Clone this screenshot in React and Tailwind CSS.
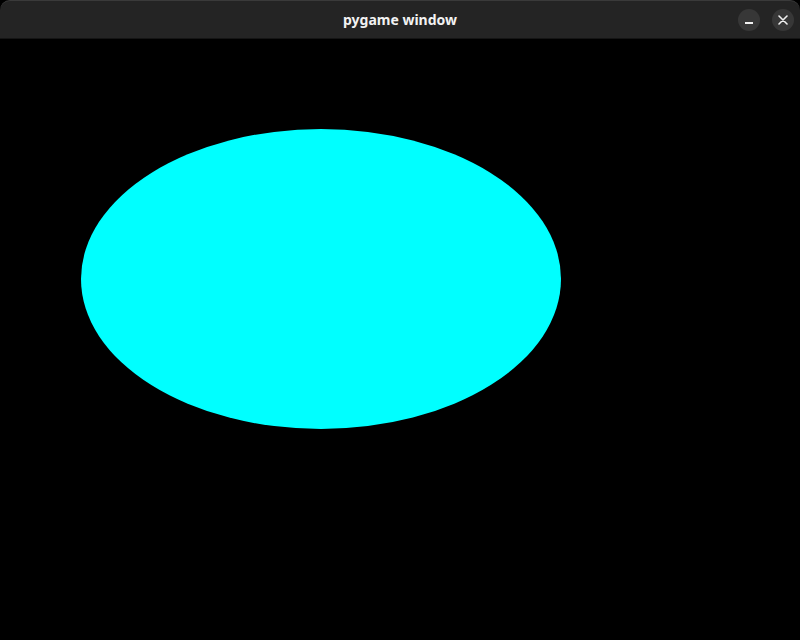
import React from "react";

export default function App() {
  return (
    <div className="w-[800px] h-[640px] bg-black overflow-hidden flex flex-col" style={{ fontFamily: '"Noto Sans", "DejaVu Sans", sans-serif' }}>
      <div className="h-[39px] shrink-0 bg-[#242424] rounded-t-[10px] border-t border-[#3a3a3a] border-b border-b-[#151515] flex items-center relative">
        <div className="flex-1 text-center text-[14px] font-bold text-[#f2f2f2] leading-none">pygame window</div>
        <div className="absolute right-[6px] top-[8px] flex gap-[12px]">
          <div className="w-[22px] h-[22px] rounded-full bg-[#373737] flex items-center justify-center">
            <div className="w-[8px] h-[1.5px] bg-[#f0f0f0] mt-[6px]" />
          </div>
          <div className="w-[22px] h-[22px] rounded-full bg-[#373737] flex items-center justify-center">
            <svg width="10" height="10" viewBox="0 0 10 10">
              <path d="M1 1 L9 9 M9 1 L1 9" stroke="#f0f0f0" strokeWidth="1.6" strokeLinecap="round" />
            </svg>
          </div>
        </div>
      </div>
      <div className="flex-1 bg-black">
        <svg width="800" height="601" viewBox="0 0 800 601" className="block">
          <ellipse cx="321" cy="240" rx="240" ry="150" fill="#00ffff" />
        </svg>
      </div>
    </div>
  );
}
